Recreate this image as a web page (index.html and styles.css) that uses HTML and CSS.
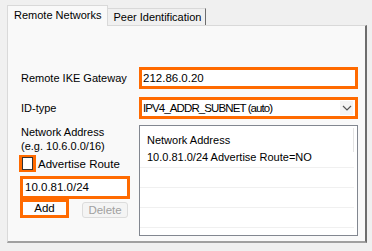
FILE: index.html
```html
<!DOCTYPE html>
<html lang="en">
<head>
  <meta charset="UTF-8" />
  <title>Remote Networks</title>
  <link rel="stylesheet" href="styles.css">
</head>
<body>
  <div class="window">
    <div class="tabs">
      <div class="tab active">Remote Networks</div>
      <div class="tab">Peer Identification</div>
    </div>
    <div class="panel">
      <div class="form-row gateway">
        <label class="label">Remote IKE Gateway</label>
        <div class="field hl">212.86.0.20</div>
      </div>
      <div class="form-row">
        <label class="label">ID-type</label>
        <div class="field select hl">
          <span class="select-value">IPV4_ADDR_SUBNET (auto)</span>
          <span class="arrow">
            <svg width="10" height="6" viewBox="0 0 10 6"><path d="M1 1 L5 5 L9 1" fill="none" stroke="#555" stroke-width="1.2"/></svg>
          </span>
        </div>
      </div>
      <div class="networks">
        <div class="left">
          <div class="label">Network Address<br>(e.g. 10.6.0.0/16)</div>
          <div class="check-row">
            <span class="check hl"><span class="box"></span></span>
            <span>Advertise Route</span>
          </div>
          <div class="field addr hl">10.0.81.0/24</div>
          <div class="buttons">
            <div class="btn-wrap hl"><button class="btn">Add</button></div>
            <button class="btn disabled">Delete</button>
          </div>
        </div>
        <div class="list">
          <div class="list-head">Network Address</div>
          <div class="list-row">10.0.81.0/24 Advertise Route=NO</div>
          <div class="list-row"></div>
          <div class="list-row"></div>
          <div class="list-row"></div>
          <span class="scroll-line"></span>
        </div>
      </div>
    </div>
  </div>
</body>
</html>
```

FILE: styles.css
```css
body {
  margin: 0;
  background-color: #f0f0f0;
  font-family: 'Liberation Sans', Arial, sans-serif;
  font-size: 11px;
  color: #000;
}
.window {
  padding: 5px 5px 8px 7px;
}
.tabs {
  display: flex;
  align-items: flex-end;
  height: 20px;
}
.tab {
  height: 17px;
  line-height: 17px;
  padding: 0 4px 0 5px;
  box-sizing: border-box;
  border: 1px solid #d9d9d9;
  border-bottom: none;
  border-right: 1px solid #6d6d6d;
  background-color: #f0f0f0;
  margin-left: -1px;
  font-size: 11px;
}
.tab.active {
  height: 21px;
  line-height: 19px;
  padding: 0 6px;
  margin-left: 0;
  margin-bottom: -1px;
  background-color: #f9f9f9;
  border-right: 1px solid #d9d9d9;
  position: relative;
  z-index: 1;
}
.panel {
  width: 360px;
  height: 218px;
  box-sizing: border-box;
  background-color: #f9f9f9;
  border: 1px solid #d9d9d9;
  border-right: 2px solid #6d6d6d;
  border-bottom: 2px solid #a0a0a0;
  padding: 41px 0 0 12px;
}
.form-row {
  display: grid;
  grid-template-columns: 119px 219px;
  align-items: center;
  height: 22px;
  margin-bottom: 8px;
}
.label {
  padding-left: 1px;
  line-height: 14px;
}
.hl {
  border: 3px solid #ff6a00;
  box-sizing: border-box;
}
.field {
  height: 22px;
  background-color: #fff;
  padding-left: 1px;
  line-height: 16px;
  font-size: 11.5px;
}
.select {
  display: flex;
  justify-content: space-between;
  align-items: center;
  line-height: 16px;
}
.select-value {
  letter-spacing: -0.9px;
}
.arrow {
  display: flex;
  align-items: center;
  justify-content: center;
  width: 13px;
  height: 14px;
  margin-right: 2px;
  background-color: #f4f4f4;
}
.networks {
  display: grid;
  grid-template-columns: 119px 219px;
  margin-top: -2px;
}
.left {
  display: flex;
  flex-direction: column;
}
.check-row {
  display: flex;
  align-items: center;
  gap: 2px;
  margin-top: 2px;
  margin-left: -1px;
  font-size: 11.5px;
}
.check {
  width: 17px;
  height: 17px;
  display: flex;
  align-items: center;
  justify-content: center;
  background-color: #fff;
}
.box {
  width: 11px;
  height: 11px;
  border: 1px solid #333;
}
.addr {
  width: 110px;
  height: 23px;
  margin-top: 4px;
  padding-left: 2px;
  line-height: 17px;
}
.buttons {
  display: flex;
  align-items: flex-start;
  gap: 13px;
}
.btn-wrap {
  width: 49px;
  height: 19px;
  display: flex;
}
.btn {
  font-family: inherit;
  font-size: 11.5px;
  padding: 0;
  margin: 0;
  border: none;
  background-color: #fdfdfd;
  color: #000;
  width: 100%;
  line-height: 13px;
}
.btn.disabled {
  width: 46px;
  height: 16px;
  margin-top: 3px;
  border: 1px solid #dcdcdc;
  border-radius: 3px;
  background-color: #f4f4f4;
  color: #a0a0a0;
}
.list {
  position: relative;
  height: 111px;
  box-sizing: border-box;
  background-color: #fff;
  border: 1px solid #828790;
  padding: 6px 0 0 7px;
}
.list-head {
  height: 16px;
  line-height: 16px;
}
.list-row {
  height: 19px;
  line-height: 18px;
  border-bottom: 1px solid #f0f0f0;
  margin-left: -7px;
  padding-left: 7px;
  margin-right: 3px;
  font-size: 11px;
}
.scroll-line {
  position: absolute;
  right: 3px;
  top: 2px;
  width: 1px;
  height: 24px;
  background-color: #e3e3e3;
}
```
